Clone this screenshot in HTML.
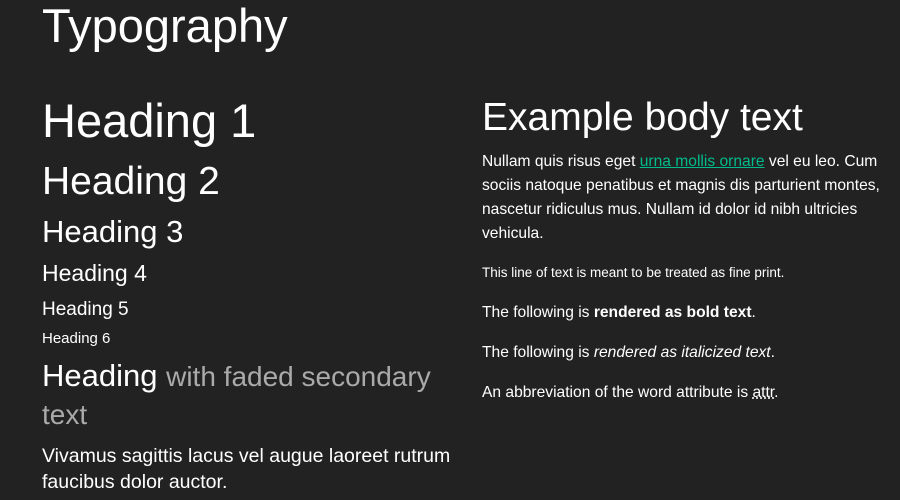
<!DOCTYPE html>
<html><head><meta charset="utf-8"><style>
html,body{margin:0;padding:0;background:#222;width:900px;height:500px;overflow:hidden}
body{font-family:"Liberation Sans",sans-serif;color:#fff;position:relative}
.a{position:absolute;white-space:nowrap;line-height:1.117}
.f{color:#aaa}
a{color:#00bc8c;text-decoration:underline}
abbr{text-decoration:underline dotted;}
</style></head><body>
<div class="a" style="left:42px;top:0px;font-size:47px">Typography</div>
<div class="a" style="left:42px;top:95px;font-size:47px">Heading 1</div>
<div class="a" style="left:42px;top:160px;font-size:39px">Heading 2</div>
<div class="a" style="left:42px;top:215px;font-size:31px">Heading 3</div>
<div class="a" style="left:42px;top:261px;font-size:23px">Heading 4</div>
<div class="a" style="left:42px;top:299px;font-size:19px">Heading 5</div>
<div class="a" style="left:42px;top:331px;font-size:15px">Heading 6</div>
<div class="a" style="left:42px;top:357px;font-size:31px;line-height:37px">Heading <span class="f" style="font-size:28px">with faded secondary</span><br><span class="f" style="font-size:28px">text</span></div>
<div class="a" style="left:42px;top:443px;font-size:19.5px;line-height:26px">Vivamus sagittis lacus vel augue laoreet rutrum<br>faucibus dolor auctor.</div>
<div class="a" style="left:482px;top:96px;font-size:39px">Example body text</div>
<div class="a" style="left:482px;top:150px;font-size:15.6px;line-height:24px">Nullam quis risus eget <a>urna mollis ornare</a> vel eu leo. Cum<br>sociis natoque penatibus et magnis dis parturient montes,<br>nascetur ridiculus mus. Nullam id dolor id nibh ultricies<br>vehicula.</div>
<div class="a" style="left:482px;top:265px;font-size:13.5px">This line of text is meant to be treated as fine print.</div>
<div class="a" style="left:482px;top:304px;font-size:15.6px">The following is <b>rendered as bold text</b>.</div>
<div class="a" style="left:482px;top:344px;font-size:15.6px">The following is <i>rendered as italicized text</i>.</div>
<div class="a" style="left:482px;top:384px;font-size:15.6px">An abbreviation of the word attribute is <abbr>attr</abbr>.</div>
</body></html>
